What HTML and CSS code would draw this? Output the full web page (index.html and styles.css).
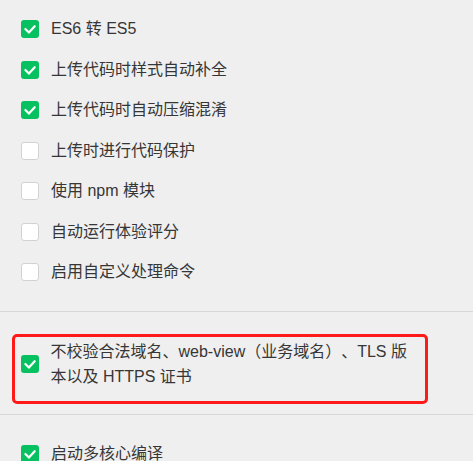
FILE: index.html
```html
<!DOCTYPE html>
<html lang="zh-CN">
<head>
<meta charset="utf-8">
<link rel="stylesheet" href="styles.css">
</head>
<body>
<div class="page">
  <section class="group first">
    <label class="opt"><span class="box on"><svg viewBox="0 0 18 18"><path d="M4.4 9l3.5 3.6 5.8-6.4"/></svg></span><span class="txt">ES6 转 ES5</span></label>
    <label class="opt"><span class="box on"><svg viewBox="0 0 18 18"><path d="M4.4 9l3.5 3.6 5.8-6.4"/></svg></span><span class="txt">上传代码时样式自动补全</span></label>
    <label class="opt"><span class="box on"><svg viewBox="0 0 18 18"><path d="M4.4 9l3.5 3.6 5.8-6.4"/></svg></span><span class="txt">上传代码时自动压缩混淆</span></label>
    <label class="opt"><span class="box"></span><span class="txt">上传时进行代码保护</span></label>
    <label class="opt"><span class="box"></span><span class="txt">使用 npm 模块</span></label>
    <label class="opt"><span class="box"></span><span class="txt">自动运行体验评分</span></label>
    <label class="opt"><span class="box"></span><span class="txt">启用自定义处理命令</span></label>
  </section>
  <section class="group mid">
    <label class="opt multi highlight"><span class="box on"><svg viewBox="0 0 18 18"><path d="M4.4 9l3.5 3.6 5.8-6.4"/></svg></span><span class="txt">不校验合法域名、web-view（业务域名）、TLS 版本以及 HTTPS 证书</span></label>
  </section>
  <section class="group last">
    <label class="opt"><span class="box on"><svg viewBox="0 0 18 18"><path d="M4.4 9l3.5 3.6 5.8-6.4"/></svg></span><span class="txt">启动多核心编译</span></label>
  </section>
</div>
</body>
</html>
```
FILE: styles.css
```css
html, body {
  margin: 0;
  padding: 0;
  background: #efefef;
}
body {
  font-family: "Liberation Sans", "Noto Sans CJK SC", sans-serif;
  font-size: 16px;
  color: #363636;
  width: 473px;
  height: 461px;
  overflow: hidden;
  text-spacing-trim: space-all;
}
.group {
  display: flex;
  flex-direction: column;
  gap: 22.5px;
}
.group.first {
  padding: 20px 0 30px 21px;
  border-bottom: 1px solid #d8d8d8;
}
.group.mid {
  padding: 22px 0 10px 12px;
  border-bottom: 1px solid #d8d8d8;
}
.group.last {
  padding: 30px 0 0 21px;
}
.opt {
  display: flex;
  align-items: center;
  height: 18px;
}
.box {
  flex: none;
  width: 18px;
  height: 18px;
  box-sizing: border-box;
  border: 1px solid #d2d2d2;
  border-radius: 3px;
  background: #fff;
  margin-right: 12px;
  display: flex;
}
.box.on {
  background: #07c160;
  border: none;
}
.box svg {
  width: 18px;
  height: 18px;
  fill: none;
  stroke: #fff;
  stroke-width: 2.2;
  stroke-linecap: round;
  stroke-linejoin: round;
}
.txt {
  line-height: 18px;
  white-space: nowrap;
  text-spacing-trim: space-all;
}
.opt.multi {
  height: auto;
}
.opt.multi .txt {
  white-space: normal;
  line-height: 25px;
  width: 370px;
}
.highlight {
  width: 416px;
  box-sizing: border-box;
  border: 3.5px solid #ff1a1a;
  border-radius: 5px;
  padding: 2px 10px 12px 5.5px;
}
```
